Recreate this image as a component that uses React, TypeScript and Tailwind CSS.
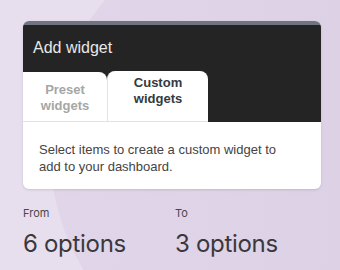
export default function App() {
  return (
    <div className="relative h-[270px] w-[340px] overflow-hidden bg-[#e8dfee] pt-[21px]">
      {/* soft arc in the background */}
      <div className="pointer-events-none absolute left-[50px] top-[-82px] h-[464px] w-[464px] rounded-full bg-gradient-to-r from-[#e1d6e9] to-[#dbcee4]" />

      <div className="relative mx-[23px] w-[298px]">
        {/* Dialog card */}
        <div className="overflow-hidden rounded-[6px] bg-white shadow-sm">
          <div className="h-[4px] bg-[#6f7480]" />
          <div className="bg-[#242424]">
            <div className="h-[46px] pl-[10px] pt-[13px] font-['Liberation_Sans',Arial,sans-serif] text-[16px] leading-[20px] text-[#e8e8e8]">
              Add widget
            </div>
            <div className="flex h-[51px] items-end">
              <div className="flex h-[50px] w-[84px] flex-col items-center justify-center rounded-tr-[8px] border-b border-[#e3e3e3] bg-white pt-[2px] font-['Liberation_Sans',Arial,sans-serif] text-[13px] font-bold leading-[16px] text-[#a6a6a6]">
                <span>Preset</span>
                <span>widgets</span>
              </div>
              <div className="flex h-[51px] w-[101px] flex-col items-center justify-start rounded-t-[8px] border-b border-l border-[#e3e3e3] bg-white pt-[4px] font-['Liberation_Sans',Arial,sans-serif] text-[13px] font-bold leading-[16px] text-[#333a40]">
                <span>Custom</span>
                <span>widgets</span>
              </div>
            </div>
          </div>
          <div className="h-[67px] pl-[16px] pr-[36px] pt-[19px] font-['Liberation_Sans',Arial,sans-serif] text-[13px] leading-[17px] text-[#444]">
            Select items to create a custom widget to add to your dashboard.
          </div>
        </div>

        {/* From / To */}
        <div className="mt-[17px] flex font-['Inter',sans-serif] text-[#3a383c]">
          <div className="w-[152px]">
            <div className="text-[11px] leading-[14px] text-[#4a474d]">From</div>
            <div className="mt-[10px] text-[24px] leading-[28px] tracking-[-0.3px]">6 options</div>
          </div>
          <div>
            <div className="text-[11px] leading-[14px] text-[#4a474d]">To</div>
            <div className="mt-[10px] text-[24px] leading-[28px] tracking-[-0.3px]">3 options</div>
          </div>
        </div>
      </div>
    </div>
  );
}
